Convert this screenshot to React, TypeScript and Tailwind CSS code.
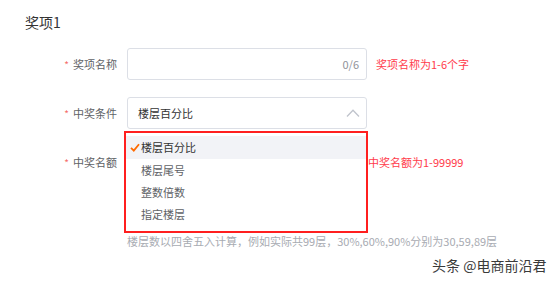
import React from "react";

const font = { fontFamily: '"Noto Sans CJK SC", "Noto Sans", sans-serif' };

function Label({ text }: { text: string }) {
  return (
    <div className="w-[117px] shrink-0 flex items-center justify-end text-[11px] text-[#606266]">
      <span className="text-[#f56c6c] mr-[4px] text-[10px]">*</span>
      <span>{text}</span>
    </div>
  );
}

export default function App() {
  return (
    <div className="relative w-[554px] h-[281px] bg-white overflow-hidden" style={font}>
      <div className="pl-[25px] pt-[12px] text-[14px] leading-[20px] text-[#333]">奖项1</div>

      <div className="mt-[16px] flex items-center h-[32px]">
        <Label text="奖项名称" />
        <div className="ml-[10px] w-[240px] h-[32px] border border-[#dcdfe6] rounded-[3px] flex items-center justify-end pr-[7px] text-[11px] text-[#909399]">
          0/6
        </div>
        <div className="ml-[9px] text-[11px] text-[#ff3b4b]">奖项名称为1-6个字</div>
      </div>

      <div className="mt-[17px] flex items-center h-[32px]">
        <Label text="中奖条件" />
        <div className="ml-[10px] w-[240px] h-[32px] border border-[#dcdfe6] rounded-[3px] flex items-center justify-between pl-[10px] pr-[6px] text-[11px] text-[#333]">
          <span>楼层百分比</span>
          <svg width="14" height="8" viewBox="0 0 14 8" fill="none">
            <path d="M1 7.5L7 1.2L13 7.5" stroke="#c0c4cc" strokeWidth="1.3" />
          </svg>
        </div>
      </div>

      <div className="mt-[17px] flex items-center h-[32px]">
        <Label text="中奖名额" />
        <div className="ml-[251px] text-[11px] text-[#ff3b4b]">中奖名额为1-99999</div>
      </div>

      <div className="mt-[55px] pl-[127px] text-[11px] leading-[16px] text-[#a8abb2] whitespace-nowrap">
        楼层数以四舍五入计算，例如实际共99层，30%,60%,90%分别为30,59,89层
      </div>

      <div className="absolute left-[124px] top-[131px] w-[244px] h-[102px] border-2 border-[#ff1f1f] bg-white pt-[3px]">
        <div className="h-[23px] bg-[#f2f3f7] flex items-center pl-[4px] text-[11px] text-[#333]">
          <svg width="10" height="9" viewBox="0 0 10 9" className="mr-[1px]">
            <path d="M1 4.8L3.8 7.6L9 1.2" stroke="#ff6a00" strokeWidth="1.8" fill="none" />
          </svg>
          <span>楼层百分比</span>
        </div>
        <div className="h-[22px] flex items-center pl-[15px] text-[11px] text-[#606266]">楼层尾号</div>
        <div className="h-[22px] flex items-center pl-[15px] text-[11px] text-[#606266]">整数倍数</div>
        <div className="h-[22px] flex items-center pl-[15px] text-[11px] text-[#606266]">指定楼层</div>
      </div>

      <div
        className="absolute left-[432px] top-[256px] text-[14px] leading-[18px] text-[#3a3a3a] whitespace-nowrap"
        style={{ textShadow: "0 0 2px rgba(255,255,255,0.9)" }}
      >
        头条 @电商前沿君
      </div>
    </div>
  );
}
